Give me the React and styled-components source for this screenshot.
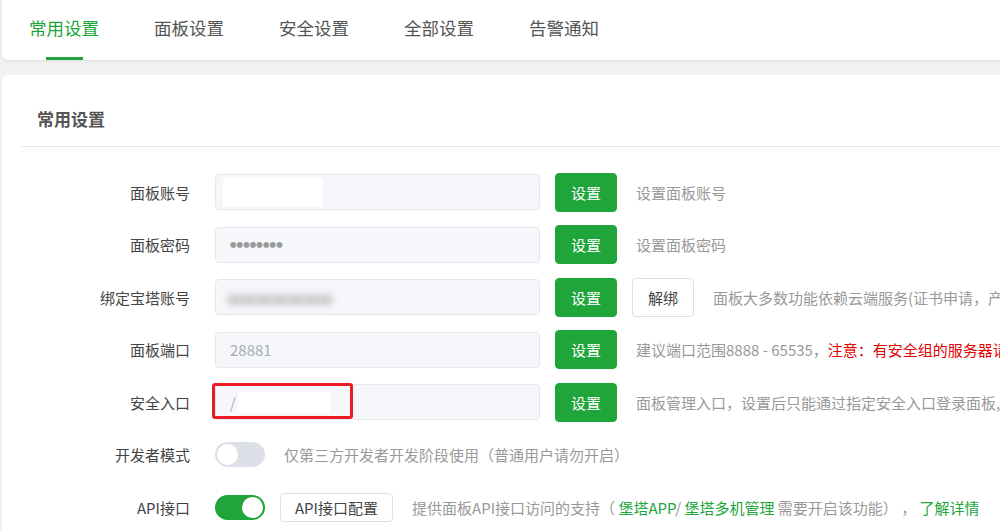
import React, { useState } from 'react';
import styled, { createGlobalStyle } from 'styled-components';

const GlobalStyle = createGlobalStyle`
  html, body {
    margin: 0;
    padding: 0;
    background: #f2f2f2;
    overflow: hidden;
  }
  body {
    font-family: "Noto Sans CJK SC", "Noto Sans", "Liberation Sans", sans-serif;
    color: #333;
  }
`;

const Page = styled.div`
  width: 1200px;
  padding-left: 2px;
`;

const TabBar = styled.div`
  height: 60px;
  background: #fff;
  border-radius: 0 0 6px 6px;
  box-shadow: 0 1px 4px rgba(0, 0, 0, 0.08);
  display: flex;
  align-items: stretch;
  padding-left: 27px;
  gap: 55px;
`;

const Tab = styled.div`
  position: relative;
  display: flex;
  align-items: center;
  padding-bottom: 6px;
  font-size: 17.5px;
  color: ${({ active }) => (active ? '#20a53a' : '#555')};
  cursor: pointer;

  &::after {
    content: '';
    display: ${({ active }) => (active ? 'block' : 'none')};
    position: absolute;
    left: 50%;
    bottom: 0;
    width: 37px;
    height: 3px;
    margin-left: -18px;
    background: #20a53a;
  }
`;

const Card = styled.div`
  margin-top: 15px;
  background: #fff;
  border-radius: 6px;
  padding: 0 0 20px 20px;
  min-height: 500px;
`;

const CardTitle = styled.div`
  padding: 31px 0 14px 15px;
  font-size: 17px;
  font-weight: bold;
  color: #555;
  line-height: 26px;
  border-bottom: 1px solid #e6e6e6;
`;

const Form = styled.div`
  display: flex;
  flex-direction: column;
  gap: 14.5px;
  padding-top: 26px;
`;

const Row = styled.div`
  display: flex;
  align-items: center;
  height: 38px;
  gap: 15px;
  white-space: nowrap;
`;

const Label = styled.div`
  width: 178px;
  text-align: right;
  font-size: 15px;
  color: #444;
  padding-right: 10px;
  box-sizing: border-box;
`;

const InputBox = styled.div`
  position: relative;
  width: 325px;
  height: 36px;
  box-sizing: border-box;
  background: #f5f7fa;
  border: 1px solid #e4e7ed;
  border-radius: 4px;
  display: flex;
  align-items: center;
  padding-left: 14px;
  font-size: 15px;
  color: #a8abb2;
`;

const Redact = styled.span`
  display: inline-block;
  width: ${({ w }) => w}px;
  height: ${({ h }) => h || 29}px;
  background: #fff;
  margin-left: ${({ ml }) => ml || -7}px;
`;

const Blurred = styled.span`
  color: #c8c8c8;
  filter: blur(3.5px);
  letter-spacing: 1px;
  font-size: 14px;
  margin-left: -2px;
`;

const Dots = styled.span`
  font-size: 6.4px;
  letter-spacing: 0.2px;
  color: #9a9a9a;
`;

const Mark = styled.div`
  position: absolute;
  left: -4px;
  top: -2px;
  width: 141px;
  height: 36px;
  box-sizing: border-box;
  border: 3px solid #ec1c24;
  border-radius: 3px;
`;

const Button = styled.button`
  height: ${({ small }) => (small ? '29px' : '39px')};
  min-width: 62px;
  padding: 0 14px;
  box-sizing: border-box;
  font-family: inherit;
  font-size: 15px;
  border-radius: 4px;
  cursor: pointer;
  border: 1px solid ${({ primary }) => (primary ? '#20a53a' : '#dcdfe6')};
  background: ${({ primary }) => (primary ? '#20a53a' : '#fff')};
  color: ${({ primary }) => (primary ? '#fff' : '#444')};
`;

const Help = styled.span`
  margin-left: 4px;
  font-size: 15px;
  color: #999;
`;

const Red = styled.span`
  color: #e60000;
`;

const Link = styled.a`
  color: #20a53a;
  text-decoration: none;
  cursor: pointer;
`;

const Switch = styled.div`
  position: relative;
  width: 50px;
  height: 25px;
  border-radius: 13px;
  background: ${({ on }) => (on ? '#20a53a' : '#dcdfe6')};
  cursor: pointer;

  &::after {
    content: '';
    position: absolute;
    top: 2px;
    left: ${({ on }) => (on ? '27px' : '2px')};
    width: 21px;
    height: 21px;
    border-radius: 50%;
    background: #fff;
    transition: left 0.2s;
  }
`;

const tabs = ['常用设置', '面板设置', '安全设置', '全部设置', '告警通知'];

export default function App() {
  const [active, setActive] = useState(0);
  const [dev, setDev] = useState(false);
  const [api, setApi] = useState(true);

  return (
    <>
      <GlobalStyle />
      <Page>
        <TabBar>
          {tabs.map((t, i) => (
            <Tab key={t} active={i === active} onClick={() => setActive(i)}>
              {t}
            </Tab>
          ))}
        </TabBar>

        <Card>
          <CardTitle>常用设置</CardTitle>
          <Form>
            <Row>
              <Label>面板账号</Label>
              <InputBox>
                <Redact w={100} />
              </InputBox>
              <Button primary>设置</Button>
              <Help>设置面板账号</Help>
            </Row>

            <Row>
              <Label>面板密码</Label>
              <InputBox>
                <Dots>●●●●●●●●</Dots>
              </InputBox>
              <Button primary>设置</Button>
              <Help>设置面板密码</Help>
            </Row>

            <Row>
              <Label>绑定宝塔账号</Label>
              <InputBox>
                <Blurred>▆▆▆▆▆▆▆</Blurred>
              </InputBox>
              <Button primary>设置</Button>
              <Button>解绑</Button>
              <Help>面板大多数功能依赖云端服务(证书申请，产品购买等)，请绑定宝塔账号</Help>
            </Row>

            <Row>
              <Label>面板端口</Label>
              <InputBox>28881</InputBox>
              <Button primary>设置</Button>
              <Help>
                建议端口范围8888 - 65535，<Red>注意：有安全组的服务器请提前在安全组放行新端口</Red>
              </Help>
            </Row>

            <Row>
              <Label>安全入口</Label>
              <InputBox>
                /<Redact w={92} h={21} ml={2} />
                <Mark />
              </InputBox>
              <Button primary>设置</Button>
              <Help>面板管理入口，设置后只能通过指定安全入口登录面板,如: /abc</Help>
            </Row>

            <Row>
              <Label>开发者模式</Label>
              <Switch on={dev} onClick={() => setDev(!dev)} />
              <Help>仅第三方开发者开发阶段使用（普通用户请勿开启）</Help>
            </Row>

            <Row>
              <Label>API接口</Label>
              <Switch on={api} onClick={() => setApi(!api)} />
              <Button small>API接口配置</Button>
              <Help>
                提供面板API接口访问的支持（ <Link>堡塔APP</Link>/ <Link>堡塔多机管理</Link> 需要开启该功能）&nbsp;，&nbsp;
                <Link>了解详情</Link>
              </Help>
            </Row>
          </Form>
        </Card>
      </Page>
    </>
  );
}
